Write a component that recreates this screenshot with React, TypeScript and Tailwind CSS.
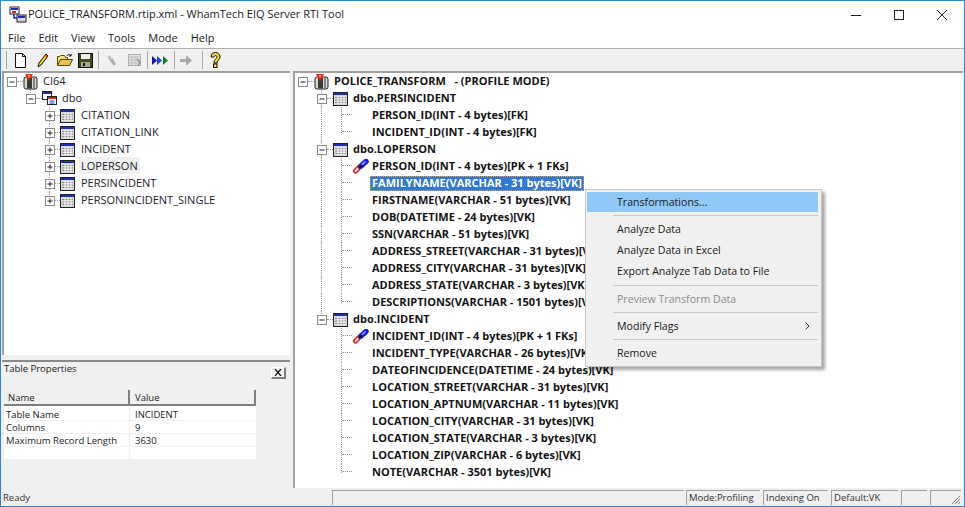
import type { ReactNode } from 'react'

const tables = ['CITATION', 'CITATION_LINK', 'INCIDENT', 'LOPERSON', 'PERSINCIDENT', 'PERSONINCIDENT_SINGLE']

type Row =
  | { kind: 'table'; text: string; last?: boolean }
  | { kind: 'col'; text: string; link?: boolean; selected?: boolean; last?: boolean; guide?: boolean }

const rows: Row[] = [
  { kind: 'table', text: 'dbo.PERSINCIDENT' },
  { kind: 'col', guide: true, text: 'PERSON_ID(INT - 4 bytes)[FK]' },
  { kind: 'col', guide: true, text: 'INCIDENT_ID(INT - 4 bytes)[FK]', last: true },
  { kind: 'table', text: 'dbo.LOPERSON' },
  { kind: 'col', guide: true, text: 'PERSON_ID(INT - 4 bytes)[PK + 1 FKs]', link: true },
  { kind: 'col', guide: true, text: 'FAMILYNAME(VARCHAR - 31 bytes)[VK]', selected: true },
  { kind: 'col', guide: true, text: 'FIRSTNAME(VARCHAR - 51 bytes)[VK]' },
  { kind: 'col', guide: true, text: 'DOB(DATETIME - 24 bytes)[VK]' },
  { kind: 'col', guide: true, text: 'SSN(VARCHAR - 51 bytes)[VK]' },
  { kind: 'col', guide: true, text: 'ADDRESS_STREET(VARCHAR - 31 bytes)[VK]' },
  { kind: 'col', guide: true, text: 'ADDRESS_CITY(VARCHAR - 31 bytes)[VK]' },
  { kind: 'col', guide: true, text: 'ADDRESS_STATE(VARCHAR - 3 bytes)[VK]' },
  { kind: 'col', guide: true, text: 'DESCRIPTIONS(VARCHAR - 1501 bytes)[VK]', last: true },
  { kind: 'table', text: 'dbo.INCIDENT', last: true },
  { kind: 'col', text: 'INCIDENT_ID(INT - 4 bytes)[PK + 1 FKs]', link: true },
  { kind: 'col', text: 'INCIDENT_TYPE(VARCHAR - 26 bytes)[VK]' },
  { kind: 'col', text: 'DATEOFINCIDENCE(DATETIME - 24 bytes)[VK]' },
  { kind: 'col', text: 'LOCATION_STREET(VARCHAR - 31 bytes)[VK]' },
  { kind: 'col', text: 'LOCATION_APTNUM(VARCHAR - 11 bytes)[VK]' },
  { kind: 'col', text: 'LOCATION_CITY(VARCHAR - 31 bytes)[VK]' },
  { kind: 'col', text: 'LOCATION_STATE(VARCHAR - 3 bytes)[VK]' },
  { kind: 'col', text: 'LOCATION_ZIP(VARCHAR - 6 bytes)[VK]' },
  { kind: 'col', text: 'NOTE(VARCHAR - 3501 bytes)[VK]', last: true },
]

function Expander({ open }: { open?: boolean }) {
  return (
    <svg width="10" height="10" viewBox="0 0 10 10" className="relative shrink-0">
      <rect x="0.5" y="0.5" width="9" height="9" fill="#fff" stroke="#8a8a8a" />
      <path d={open ? 'M2.5 5h5' : 'M2.5 5h5M5 2.5v5'} stroke="#222" />
    </svg>
  )
}

function TableIcon() {
  return (
    <svg width="15" height="14" viewBox="0 0 15 14" className="shrink-0">
      <rect x="0.5" y="0.5" width="14" height="13" fill="#d8d8d8" stroke="#222" />
      <rect x="1" y="1" width="13" height="2" fill="#1c2fb8" />
      <path d="M2 5.5h11M2 8h11M2 10.5h11" stroke="#8c8c8c" />
      <path d="M5 4v8M8 4v8M11 4v8" stroke="#fff" />
    </svg>
  )
}

function DbIcon() {
  return (
    <svg width="15" height="16" viewBox="0 0 15 16" className="shrink-0">
      <rect x="1" y="3" width="13" height="12" rx="2" fill="#d8d8d0" stroke="#222" />
      <rect x="4" y="3.5" width="5" height="11" fill="#3a3a36" />
      <path d="M11 4v10" stroke="#333" />
      <path d="M2 0h8L6 7z" fill="#e8261c" />
      <path d="M5 1h2L6 4z" fill="#f4e32c" />
    </svg>
  )
}

function SchemaIcon() {
  return (
    <svg width="15" height="15" viewBox="0 0 15 15" className="shrink-0">
      <rect x="0.5" y="0.5" width="9" height="8" fill="#fff" stroke="#222" />
      <rect x="1" y="1" width="8" height="2" fill="#1c2fb8" />
      <rect x="5.5" y="5.5" width="9" height="8" fill="#fff" stroke="#222" />
      <rect x="6" y="6" width="8" height="2" fill="#d8261c" />
      <path d="M7.5 10h5M7.5 12h5" stroke="#1c2fb8" />
    </svg>
  )
}

function LinkIcon() {
  return (
    <svg width="17" height="16" viewBox="0 0 17 16" className="shrink-0">
      <path d="M3.500 12l3.500-3.500" stroke="#e8141c" strokeWidth="5" strokeLinecap="round" />
      <path d="M3.500 12l3.500-3.500" stroke="#fff" strokeWidth="1.800" strokeLinecap="round" />
      <path d="M9 7l5-4.500" stroke="#1420d8" strokeWidth="5.500" strokeLinecap="round" />
      <path d="M10 5.500l3-2.500" stroke="#aab4ff" strokeWidth="1.500" strokeLinecap="round" />
      <path d="M6.500 9.500l3.500-3.500" stroke="#111" strokeWidth="1.800" />
    </svg>
  )
}

function ToolbarIcons() {
  return (
    <div className="flex items-center h-full">
      <div className="w-[1px] h-[18px] bg-[#a8a8a8] ml-[5px] mr-[8px]" />
      <svg width="12" height="15" viewBox="0 0 12 15" className="mr-[10px]">
        <path d="M.5.500h7l3 3v11h-10z" fill="#fff" stroke="#111" />
        <path d="M7.500.500v3h3" fill="none" stroke="#111" />
      </svg>
      <svg width="12" height="15" viewBox="0 0 12 15" className="mr-[8px]">
        <path d="M9 1l2 2-7 9-3 2 1-4z" fill="#f2d21c" stroke="#111" />
        <path d="M8 2l2.500 2" stroke="#d8261c" strokeWidth="1.500" />
      </svg>
      <svg width="16" height="14" viewBox="0 0 16 14" className="mr-[5px]">
        <path d="M.5 12.500v-9h2l1-1h4l1 2h2v2" fill="#f5dc88" stroke="#57480a" />
        <path d="M.5 12.500l3-6h12l-3 6z" fill="#e8c04a" stroke="#57480a" />
        <path d="M10 3c1-2 3-2 4 0m0-2v2h-2" fill="none" stroke="#111" />
      </svg>
      <svg width="15" height="15" viewBox="0 0 15 15">
        <rect x="0.5" y="0.5" width="14" height="14" fill="#3c4a1c" stroke="#111" />
        <rect x="3" y="1" width="9" height="5" fill="#f0f0e0" />
        <rect x="3" y="9" width="9" height="5" fill="#a8a890" />
        <rect x="5" y="10" width="2" height="3" fill="#111" />
      </svg>
      <div className="w-[1px] h-[18px] bg-[#a8a8a8] ml-[5px] mr-[8px]" />
      <svg width="11" height="13" viewBox="0 0 11 13" className="mr-[10px]">
        <path d="M2 1l4 4 3 5-2 2-4-5-2-4z" fill="#b0b0b0" />
        <path d="M3 3l2 2" stroke="#e4e4e4" />
      </svg>
      <svg width="14" height="14" viewBox="0 0 14 14">
        <rect x="0.500" y="1.500" width="12" height="11" fill="#e0e0e0" stroke="#b0b0b0" />
        <path d="M1 4h11M4 4v8M8 4v8M1 7h11M1 10h11" stroke="#c0c0c0" />
        <path d="M9 6l3 3-2 4" fill="none" stroke="#909090" strokeWidth="1.500" />
      </svg>
      <div className="w-[1px] h-[18px] bg-[#a8a8a8] ml-[5px] mr-[4px]" />
      <svg width="17" height="11" viewBox="0 0 17 11">
        <path d="M0 1l5 4.500L0 10z" fill="#10109c" />
        <path d="M5 1l5 4.500L5 10z" fill="#2040e8" />
        <path d="M11 1l5 4.500L11 10z" fill="#108030" />
      </svg>
      <div className="w-[1px] h-[18px] bg-[#a8a8a8] ml-[5px] mr-[5px]" />
      <svg width="13" height="11" viewBox="0 0 13 11">
        <path d="M0 4h6V0l6 5.500L6 11V7H0z" fill="#a8a8a8" />
      </svg>
      <div className="w-[1px] h-[18px] bg-[#a8a8a8] ml-[9px] mr-[7px]" />
      <svg width="11" height="16" viewBox="0 0 11 16">
        <path d="M1 5c0-6 9-6 9 0 0 3-3 3-3 6H4c0-4 3-4 3-6s-3-2-3 0z" fill="#f4e01c" stroke="#111" />
        <rect x="3.500" y="12" width="3.500" height="3.500" fill="#f4e01c" stroke="#111" />
      </svg>
    </div>
  )
}

function WindowButtons() {
  return (
    <div className="flex items-center gap-[33px] pr-[17px]">
      <svg width="10" height="10" viewBox="0 0 10 10"><path d="M0 5.500h10" stroke="#222" /></svg>
      <svg width="10" height="10" viewBox="0 0 10 10"><rect x="0.500" y="0.500" width="9" height="9" fill="none" stroke="#222" /></svg>
      <svg width="10" height="10" viewBox="0 0 10 10"><path d="M0 0l10 10M10 0L0 10" stroke="#222" /></svg>
    </div>
  )
}

function AppIcon() {
  return (
    <svg width="18" height="18" viewBox="0 0 18 18" className="shrink-0">
      <rect x="1" y="1" width="9" height="7" fill="#fff" stroke="#222" />
      <rect x="2" y="2" width="7" height="2" fill="#1c2fb8" />
      <rect x="3" y="5" width="4" height="2" fill="#d8261c" />
      <rect x="8" y="9" width="9" height="7" fill="#d8d8e8" stroke="#222" />
      <rect x="9" y="10" width="7" height="2" fill="#1c2fb8" />
      <path d="M5 8v4h3" stroke="#1420d8" strokeWidth="1.500" fill="none" />
    </svg>
  )
}

function LeftTree() {
  return (
    <div className="h-[284px] bg-white border-t-2 border-l-2 border-[#a0a0a0] text-[11px] leading-[17px] text-[#1c1c2c]">
      <div className="flex items-center h-[17px] pl-[3px]">
        <Expander open />
        <div className="w-[6px] border-t border-dotted border-[#999]" />
        <DbIcon />
        <span className="ml-[5px] mb-[2px]">CI64</span>
      </div>
      <div className="relative flex items-center h-[17px] pl-[22px]">
        <div className="absolute left-[26px] top-0 h-[5px] border-l border-dotted border-[#999]" />
        <Expander open />
        <div className="w-[6px] border-t border-dotted border-[#999]" />
        <SchemaIcon />
        <span className="ml-[5px] mb-[2px]">dbo</span>
      </div>
      {tables.map((t, i) => (
        <div key={t} className="relative flex items-center h-[17px] pl-[41px]">
          <div className={`absolute left-[45px] top-0 border-l border-dotted border-[#999] ${i === tables.length - 1 ? 'h-[5px]' : 'h-full'}`} />
          <Expander />
          <div className="w-[5px] border-t border-dotted border-[#999]" />
          <TableIcon />
          <span className={`ml-[4px] mb-[2px] px-[2px] ${t === 'LOPERSON' ? 'bg-[#f0f0f0]' : ''}`}>{t}</span>
        </div>
      ))}
    </div>
  )
}

function TableProperties() {
  const props = [
    ['Table Name', 'INCIDENT'],
    ['Columns', '9'],
    ['Maximum Record Length', '3630'],
    ['', ''],
  ]
  return (
    <div className="flex-1 mt-[5px] border-t-2 border-[#8a8a8a] bg-[#f0f0f0] text-[#222]">
      <div className="flex items-center justify-between h-[18px] pl-[2px] pr-[4px] text-[9.5px]">
        <span className="mb-[4px]">Table Properties</span>
        <div className="w-[15px] h-[12px] mt-[3px] bg-[#f0f0f0] border-t border-l border-white border-r-2 border-b-2 border-r-[#808080] border-b-[#808080] flex items-center justify-center">
          <svg width="8" height="7" viewBox="0 0 8 7"><path d="M1 0l6 7M7 0L1 7" stroke="#111" strokeWidth="1.200" /></svg>
        </div>
      </div>
      <div className="w-[252px] ml-[2px] mt-[10px] text-[9.5px]">
        <div className="flex h-[16px] leading-[16px] border-b-2 border-[#808080]">
          <div className="w-[126px] pl-[4px] border-r-2 border-[#808080]">Name</div>
          <div className="flex-1 pl-[5px] border-r-2 border-[#808080]">Value</div>
        </div>
        <div className="bg-white pt-[2px]">
          {props.map((p, i) => (
            <div key={i} className="flex h-[13px] leading-[13px] border-b border-[#f0f0f0]">
              <div className="w-[126px] pl-[2px] border-r border-[#f0f0f0] whitespace-nowrap">{p[0]}</div>
              <div className="flex-1 pl-[5px]">{p[1]}</div>
            </div>
          ))}
        </div>
      </div>
    </div>
  )
}

function RightTree() {
  return (
    <div className="relative flex-1 bg-white border-t-2 border-l-2 border-[#a0a0a0] ml-[3px] font-bold text-[11px] leading-[17px] text-[#141414] overflow-hidden">
      <div className="flex items-center h-[17px] pl-[3px]">
        <Expander open />
        <div className="w-[6px] border-t border-dotted border-[#999]" />
        <DbIcon />
        <span className="ml-[5px] mb-[2px]">POLICE_TRANSFORM&nbsp;&nbsp;&nbsp;- (PROFILE MODE)</span>
      </div>
      {rows.map((r, i) =>
        r.kind === 'table' ? (
          <div key={i} className="relative flex items-center h-[17px] pl-[22px]">
            <div className={`absolute left-[26px] top-0 border-l border-dotted border-[#999] ${r.last ? 'h-[5px]' : 'h-full'}`} />
            <Expander open />
            <div className="w-[6px] border-t border-dotted border-[#999]" />
            <TableIcon />
            <span className="ml-[5px] mb-[2px]">{r.text}</span>
          </div>
        ) : (
          <div key={i} className="flex h-[17px] pl-[26px]">
            <div className={`w-[20px] shrink-0 ${r.guide ? 'border-l border-dotted border-[#999]' : ''}`} />
            <div className={`w-[11px] shrink-0 border-l border-dotted border-[#999] ${r.last ? 'h-[9px]' : ''}`}>
              <div className="h-[8px] border-b border-dotted border-[#999]" />
            </div>
            <div className="w-[20px] shrink-0 flex items-center">{r.link && <LinkIcon />}</div>
            {r.selected ? (
              <span className="-ml-[2px] px-[1px] h-[15px] leading-[11px] mt-[1px] bg-[#3277d0] text-white border border-dotted border-[#e0a060] whitespace-nowrap">{r.text}</span>
            ) : (
              <span className="whitespace-nowrap leading-[15px]">{r.text}</span>
            )}
          </div>
        ),
      )}
      <ContextMenu />
    </div>
  )
}

function MenuItem({ children, hot, muted, tall }: { children: ReactNode; hot?: boolean; muted?: boolean; tall?: boolean }) {
  return (
    <div className={`${tall ? 'h-[21px] leading-[21px]' : 'h-[20px] leading-[20px]'} pl-[30px] ${hot ? 'bg-[#90c8f8]' : ''} ${muted ? 'text-[#8c8c8c]' : 'text-[#1a1a1a]'}`}>
      {children}
    </div>
  )
}

function Sep() {
  return <div className="h-[1px] my-[3px] ml-[26px] bg-[#c8c8c8]" />
}

function ContextMenu() {
  return (
    <div className="absolute left-[290px] top-[116px] w-[237px] h-[178px] bg-[#f0f0f0] border border-[#c4c4c4] pl-[1px] pr-[3px] py-[2px] font-normal text-[10.6px] shadow-[3px_3px_3px_rgba(0,0,0,0.35)]">
      <MenuItem hot>Transformations...</MenuItem>
      <Sep />
      <MenuItem tall>Analyze Data</MenuItem>
      <MenuItem tall>Analyze Data in Excel</MenuItem>
      <MenuItem tall>Export Analyze Tab Data to File</MenuItem>
      <Sep />
      <MenuItem muted>Preview Transform Data</MenuItem>
      <Sep />
      <div className="relative">
        <MenuItem>Modify Flags</MenuItem>
        <svg width="5" height="8" viewBox="0 0 5 8" className="absolute right-[8px] top-[6px]">
          <path d="M.5.500l3.500 3.500-3.500 3.500" fill="none" stroke="#333" />
        </svg>
      </div>
      <Sep />
      <MenuItem>Remove</MenuItem>
    </div>
  )
}

function StatusCell({ w, children }: { w: string; children?: ReactNode }) {
  return (
    <div className={`${w} h-[15px] mt-[2px] pl-[2px] border-t border-l border-[#a0a0a0] leading-[14px] whitespace-nowrap overflow-hidden`}>
      {children}
    </div>
  )
}

export default function App() {
  return (
    <div
      className="w-[965px] h-[507px] flex flex-col bg-white border border-[#2b88d8] overflow-hidden text-[#1a1a1a]"
      style={{ fontFamily: '"Open Sans", "Noto Sans", sans-serif' }}
    >
      <div className="h-[27px] flex items-center justify-between shrink-0">
        <div className="flex items-center pl-[8px] text-[11px]">
          <AppIcon />
          <span className="ml-[1px]">POLICE_TRANSFORM.rtip.xml - WhamTech EIQ Server RTI Tool</span>
        </div>
        <WindowButtons />
      </div>
      <div className="h-[20px] flex items-center gap-[13px] pl-[7px] text-[11px] shrink-0">
        {['File', 'Edit', 'View', 'Tools', 'Mode', 'Help'].map(m => <span key={m}>{m}</span>)}
      </div>
      <div className="h-[23px] bg-[#f0f0f0] border-t border-[#b0b0b0] shrink-0">
        <ToolbarIcons />
      </div>
      <div className="flex-1 flex bg-[#f0f0f0] min-h-0 pl-[1px] pr-[1px]">
        <div className="w-[288px] flex flex-col shrink-0">
          <LeftTree />
          <TableProperties />
        </div>
        <RightTree />
      </div>
      <div className="h-[18px] flex bg-[#f0f0f0] text-[9.5px] pl-[2px] shrink-0 text-[#333]">
        <div className="w-[329px] leading-[20px]">Ready</div>
        <StatusCell w="w-[352px]" />
        <div className="w-[2px]" />
        <StatusCell w="w-[74px]">Mode:Profiling</StatusCell>
        <div className="w-[3px]" />
        <StatusCell w="w-[65px]">Indexing On</StatusCell>
        <div className="w-[3px]" />
        <StatusCell w="w-[67px]">Default:VK</StatusCell>
        <div className="w-[3px]" />
        <StatusCell w="w-[26px]" />
        <div className="w-[3px]" />
        <div className="w-[31px] h-[15px] mt-[2px] border-t border-l border-[#a0a0a0] flex items-end justify-end">
          <svg width="10" height="10" viewBox="0 0 10 10">
            <path d="M9 1L1 9M9 4L4 9M9 7L7 9" stroke="#8a8a8a" />
          </svg>
        </div>
      </div>
    </div>
  )
}
